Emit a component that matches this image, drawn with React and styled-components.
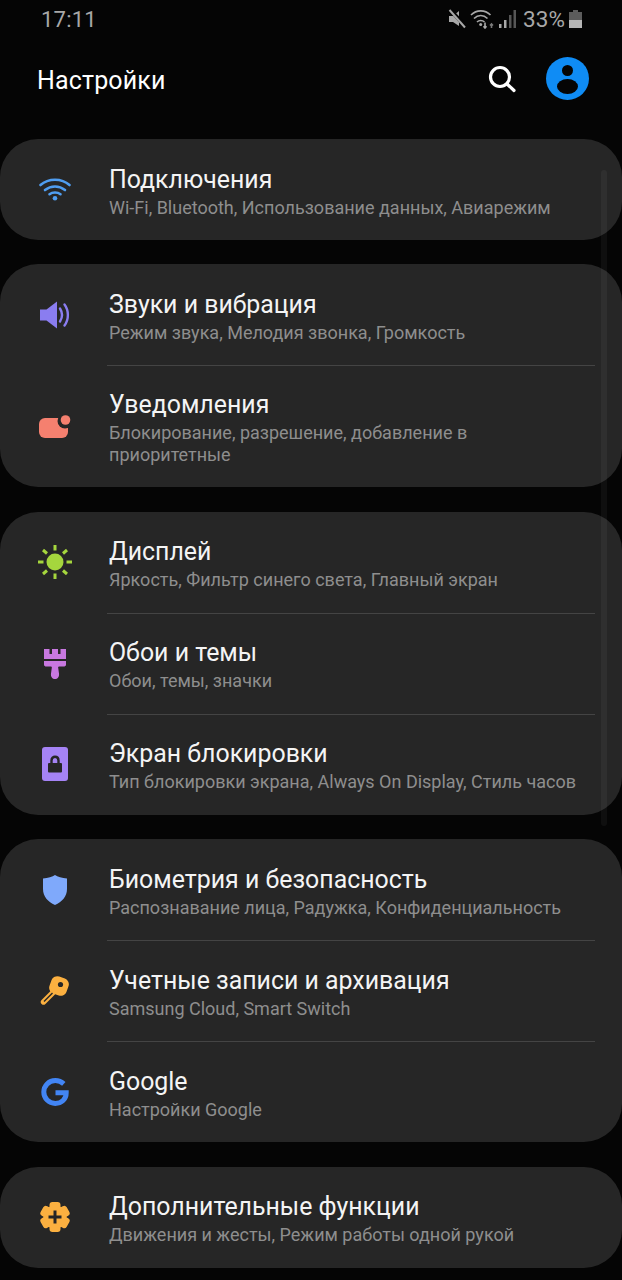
import React from "react";
import styled, { createGlobalStyle } from "styled-components";

const GlobalStyle = createGlobalStyle`
  html, body {
    margin: 0;
    padding: 0;
    background: #050505;
  }
  body {
    font-family: Roboto, "Liberation Sans", sans-serif;
  }
`;

const WifiIcon = () => (
  <svg width="32" height="23" viewBox="0 0 32 23" fill="none" stroke="#4f9df0" strokeWidth="2.600" strokeLinecap="round">
    <path d="M1.500 7C9.500 0 22.500 0 30.500 7" />
    <path d="M6 12C12 7.300 20 7.300 26 12" />
    <path d="M10.500 16.200C13.500 14 18.500 14 21.500 16.200" />
    <circle cx="16" cy="20.300" r="2.300" fill="#4f9df0" stroke="none" />
  </svg>
);

const SoundIcon = () => (
  <svg width="30" height="28" viewBox="0 0 30 28" fill="#8a7df0">
    <path d="M0 8.500H6.500L17 0.500V27.500L6.500 19.500H0Z" />
    <path d="M20 7.500C22.500 11.500 22.500 16.500 20 20.500" fill="none" stroke="#8a7df0" strokeWidth="2.400" strokeLinecap="round" />
    <path d="M24.500 3.500C29 9.500 29 18.500 24.500 24.500" fill="none" stroke="#8a7df0" strokeWidth="2.400" strokeLinecap="round" />
  </svg>
);

const NotifyIcon = () => (
  <svg width="32" height="23" viewBox="0 0 32 23">
    <rect x="0" y="3" width="29" height="20" rx="6" fill="#f5806f" />
    <circle cx="26" cy="6" r="7.500" fill="#262626" />
    <circle cx="26.500" cy="5" r="4.800" fill="#f5806f" />
  </svg>
);

const SunIcon = () => (
  <svg width="36" height="36" viewBox="0 0 36 36" stroke="#a5d63d" strokeWidth="3">
    <circle cx="18" cy="18" r="8.500" fill="#a5d63d" stroke="none" />
    <path d="M18 1V6.500M18 29.500V35M1 18H6.500M29.500 18H35M6 6L10 9.500M30 6L26 9.500M6 30L10 26.500M30 30L26 26.500" />
  </svg>
);

const BrushIcon = () => (
  <svg width="22" height="31" viewBox="0 0 22 31" fill="#c878e0">
    <path d="M0 1H5.500V6H8V1H14V6H16.500V1H22V11H0Z" />
    <path d="M0 13H22V16.500C22 18 21 18.500 19.500 18.500H15C14 18.500 14 19.500 14.300 20.500L15 25.500C15.500 29 13.500 31 11 31C8.500 31 6.500 29 7 25.500L7.700 20.500C8 19.500 8 18.500 7 18.500H2.500C1 18.500 0 18 0 16.500Z" />
  </svg>
);

const LockIcon = () => (
  <svg width="26" height="34" viewBox="0 0 26 34">
    <rect x="0" y="0" width="26" height="34" rx="3" fill="#a583f5" />
    <path d="M9.500 16V13.500C9.500 8.500 16.500 8.500 16.500 13.500V16" fill="none" stroke="#262626" strokeWidth="2.400" />
    <rect x="6" y="16" width="14" height="9.500" rx="1" fill="#262626" />
  </svg>
);

const ShieldIcon = () => (
  <svg width="24" height="30" viewBox="0 0 24 30" fill="#7fa9fb">
    <path d="M12 0C14.500 2 19 3 24 3.500V14C24 21.500 19 27 12 30C5 27 0 21.500 0 14V3.500C5 3 9.500 2 12 0Z" />
  </svg>
);

const KeyIcon = () => (
  <svg width="30" height="30" viewBox="0 0 30 30">
    <rect x="10" y="1" width="18" height="18" rx="6" fill="#fbb040" transform="rotate(20 19 10)" />
    <path d="M13 16.500L3.500 26" stroke="#fbb040" strokeWidth="5.400" strokeLinecap="round" />
    <path d="M12.500 17L4 25.500" stroke="#262626" strokeWidth="1.500" />
    <circle cx="20.500" cy="8.500" r="2.600" fill="#262626" />
  </svg>
);

const GoogleIcon = () => (
  <svg width="28" height="28" viewBox="0 0 28 28" fill="none">
    <path d="M22.800 5.900C20.500 3.800 17.500 2.600 14.300 2.600C7.800 2.600 2.800 7.700 2.800 14C2.800 20.300 7.800 25.400 14.300 25.400C20.500 25.400 25.200 21.300 25.200 14.700H14.500" stroke="#4285f4" strokeWidth="5" />
  </svg>
);

const PlusGearIcon = () => (
  <svg width="30" height="30" viewBox="0 0 30 30" fill="#fbb040">
    <circle cx="15" cy="15" r="11.500" />
    <rect x="9.500" y="0" width="11" height="30" rx="3" />
    <rect x="9.500" y="0" width="11" height="30" rx="3" transform="rotate(60 15 15)" />
    <rect x="9.500" y="0" width="11" height="30" rx="3" transform="rotate(120 15 15)" />
    <path d="M15 8.500V21.500M8.500 15H21.500" stroke="#262626" strokeWidth="3" />
  </svg>
);

const groups = [
  [{ icon: <WifiIcon />, title: "Подключения", text: "Wi-Fi, Bluetooth, Использование данных, Авиарежим" }],
  [
    { icon: <SoundIcon />, title: "Звуки и вибрация", text: "Режим звука, Мелодия звонка, Громкость" },
    { icon: <NotifyIcon />, title: "Уведомления", text: "Блокирование, разрешение, добавление в приоритетные" },
  ],
  [
    { icon: <SunIcon />, title: "Дисплей", text: "Яркость, Фильтр синего света, Главный экран" },
    { icon: <BrushIcon />, title: "Обои и темы", text: "Обои, темы, значки" },
    { icon: <LockIcon />, title: "Экран блокировки", text: "Тип блокировки экрана, Always On Display, Стиль часов" },
  ],
  [
    { icon: <ShieldIcon />, title: "Биометрия и безопасность", text: "Распознавание лица, Радужка, Конфиденциальность" },
    { icon: <KeyIcon />, title: "Учетные записи и архивация", text: "Samsung Cloud, Smart Switch" },
    { icon: <GoogleIcon />, title: "Google", text: "Настройки Google" },
  ],
  [{ icon: <PlusGearIcon />, title: "Дополнительные функции", text: "Движения и жесты, Режим работы одной рукой" }],
];

const App = () => {
  return (
    <Page>
      <GlobalStyle />
      <StatusBar>
        <Clock>17:11</Clock>
        <StatusIcons>
          <svg width="18" height="20" viewBox="0 0 18 20" fill="#a8a8a8">
            <path d="M1 7H5L11 2V17L5 13H1Z" />
            <path d="M2 0.500L18 18" stroke="#050505" strokeWidth="4" />
            <path d="M1.500 1L17 18.500" stroke="#a8a8a8" strokeWidth="2" />
          </svg>
          <svg width="25" height="20" viewBox="0 0 25 20" fill="none" stroke="#a8a8a8" strokeWidth="1.600">
            <path d="M1 6C6.500 0.500 15 0.500 20.500 6M4 9.500C8 5.500 13.500 5.500 17.500 9.500M7 13C9 11 12.500 11 14.500 13" />
            <circle cx="10.700" cy="15.500" r="1.500" fill="#a8a8a8" stroke="none" />
            <path d="M15 13.500V19M13.500 17.200L15 19L16.500 17.200" />
            <path d="M21.500 19V15M20 16.500L21.500 15L23 16.500" stroke="#7a7a7a" />
          </svg>
          <svg width="17" height="18" viewBox="0 0 17 18" fill="#a8a8a8">
            <rect x="0" y="14" width="2.500" height="4" />
            <rect x="5" y="10" width="2.500" height="8" />
            <rect x="10" y="5" width="2.500" height="13" opacity="0.5" />
            <rect x="14.500" y="0" width="2.500" height="18" opacity="0.5" />
          </svg>
          <Percent>33%</Percent>
          <svg width="13" height="18" viewBox="0 0 13 18">
            <path d="M4 0H9V2H13V18H0V2H4Z" fill="#5c5c5c" />
            <rect x="0" y="10" width="13" height="8" fill="#b5b5b5" />
          </svg>
        </StatusIcons>
      </StatusBar>
      <Header>
        <Heading>Настройки</Heading>
        <HeaderActions>
          <svg width="28" height="28" viewBox="0 0 28 28" fill="none" stroke="#fff" strokeWidth="3.200" strokeLinecap="round">
            <circle cx="12" cy="12" r="9.500" />
            <path d="M19 19L26 25.500" />
          </svg>
          <svg width="43" height="43" viewBox="0 0 43 43">
            <circle cx="21.500" cy="21.500" r="21.500" fill="#0f8cf5" />
            <circle cx="21.500" cy="13.500" r="5.500" fill="#050505" />
            <ellipse cx="21.500" cy="29.500" rx="10.500" ry="7.500" fill="#050505" />
          </svg>
        </HeaderActions>
      </Header>
      <List>
        {groups.map((group, i) => (
          <Card key={i}>
            {group.map((item) => (
              <Row key={item.title}>
                <IconSlot>{item.icon}</IconSlot>
                <Body>
                  <Title>{item.title}</Title>
                  <Sub>{item.text}</Sub>
                </Body>
              </Row>
            ))}
          </Card>
        ))}
      </List>
      <Scrollbar />
    </Page>
  );
};

export default App;

const Page = styled.div`
  position: relative;
  width: 622px;
  height: 1280px;
  overflow: hidden;
  background: #050505;
`;

const StatusBar = styled.div`
  height: 38px;
  display: flex;
  align-items: center;
  justify-content: space-between;
  padding: 0 40px 0 41px;
  color: #a8a8a8;
`;

const Clock = styled.span`
  font-size: 22px;
  letter-spacing: 0.2px;
`;

const StatusIcons = styled.div`
  display: flex;
  align-items: center;
  gap: 4px;
`;

const Percent = styled.span`
  font-size: 22.5px;
  margin: 0 0 0 3px;
  letter-spacing: 0.1px;
`;

const Header = styled.header`
  height: 101px;
  display: flex;
  align-items: flex-start;
  justify-content: space-between;
  padding: 19px 33px 0 37px;
  box-sizing: border-box;
`;

const Heading = styled.h1`
  margin: 9px 0 0;
  font-size: 25px;
  line-height: 30px;
  letter-spacing: 0.15px;
  font-weight: 400;
  color: #fff;
`;

const HeaderActions = styled.div`
  display: flex;
  align-items: center;
  gap: 30px;
`;

const List = styled.main`
  display: flex;
  flex-direction: column;
  gap: 24.4px;
`;

const Card = styled.section`
  background: #262626;
  border-radius: 38px;
  overflow: hidden;
`;

const Row = styled.div`
  display: flex;
  align-items: center;
  min-height: 101px;
  position: relative;

  & + &::before {
    content: "";
    position: absolute;
    top: 0;
    left: 107px;
    right: 27px;
    height: 1px;
    background: #444;
  }
`;

const IconSlot = styled.div`
  width: 109px;
  flex: none;
  display: flex;
  justify-content: center;
`;

const Body = styled.div`
  flex: 1;
  padding: 23px 36px 21px 0;
`;

const Title = styled.div`
  font-size: 24.9px;
  line-height: 34px;
  color: #f4f4f4;
`;

const Sub = styled.div`
  font-size: 18px;
  line-height: 22px;
  color: #8e8e8e;
`;

const Scrollbar = styled.div`
  position: absolute;
  top: 170px;
  left: 601px;
  width: 6px;
  height: 656px;
  border-radius: 3px;
  background: rgba(255, 255, 255, 0.045);
`;
